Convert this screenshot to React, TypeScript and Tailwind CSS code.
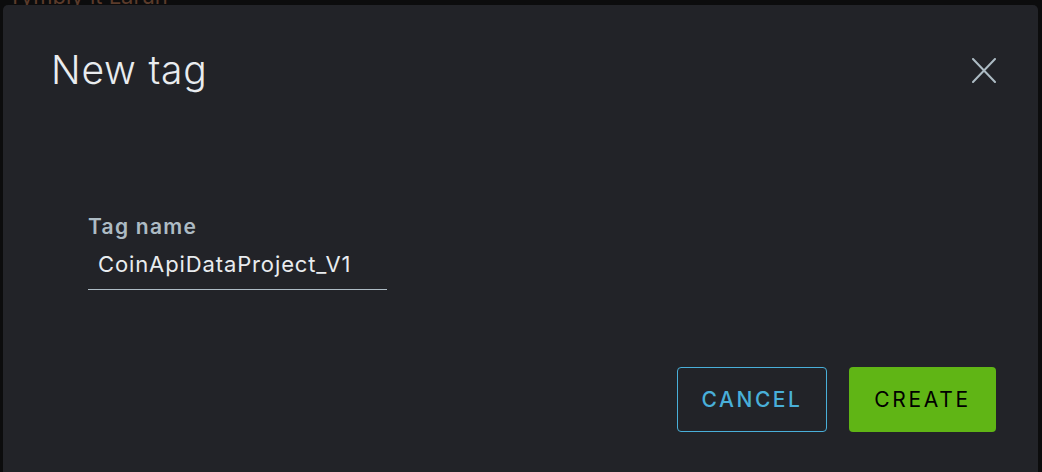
const font = { fontFamily: 'Inter, "Noto Sans", sans-serif' };

export default function App() {
  return (
    <div className="relative h-[472px] w-[1042px] overflow-hidden bg-[#0c0c0d]" style={font}>
      {/* page behind the modal */}
      <div className="-mt-[14px] pl-[8px] text-[22px] leading-[20px] text-[#5b3b2b]">Tymbly it Larun</div>

      <div className="absolute left-[3px] top-[5px] flex h-[480px] w-[1035px] flex-col rounded-[5px] bg-[#222328]">
        {/* header */}
        <div className="flex items-start justify-between pl-[48px] pr-[42px] pt-[39px]">
          <h1 className="text-[39px] leading-[52px] font-light tracking-[0.02em] text-[#e9ecef]">New tag</h1>
          <button className="mt-[14px] text-[#adbbc4]">
            <svg width="24" height="25" viewBox="0 0 24 25" fill="none" stroke="currentColor" strokeWidth="2" strokeLinecap="round">
              <path d="M1 1L23 24M23 1L1 24" />
            </svg>
          </button>
        </div>

        {/* body */}
        <div className="pl-[85px] pt-[119px]">
          <label className="block text-[21px] leading-[24px] font-semibold tracking-[0.06em] text-[#adbbc4]">Tag name</label>
          <div className="mt-[10px] w-[299px] border-b border-[#adbbc4] pb-[9px] pl-[10px] text-[22px] leading-[31px] tracking-[0.04em] text-[#e9ecef]">
            CoinApiDataProject_V1
          </div>
        </div>

        {/* footer */}
        <div className="mt-[77px] flex justify-end gap-[22px] pr-[42px]">
          <button className="h-[65px] w-[150px] rounded-[4px] border border-[#49afd9] text-[21px] font-medium tracking-[0.12em] text-[#49afd9]">
            CANCEL
          </button>
          <button className="h-[65px] w-[147px] rounded-[4px] bg-[#60b515] text-[21px] tracking-[0.13em] text-[#000]">
            CREATE
          </button>
        </div>
      </div>
    </div>
  );
}
